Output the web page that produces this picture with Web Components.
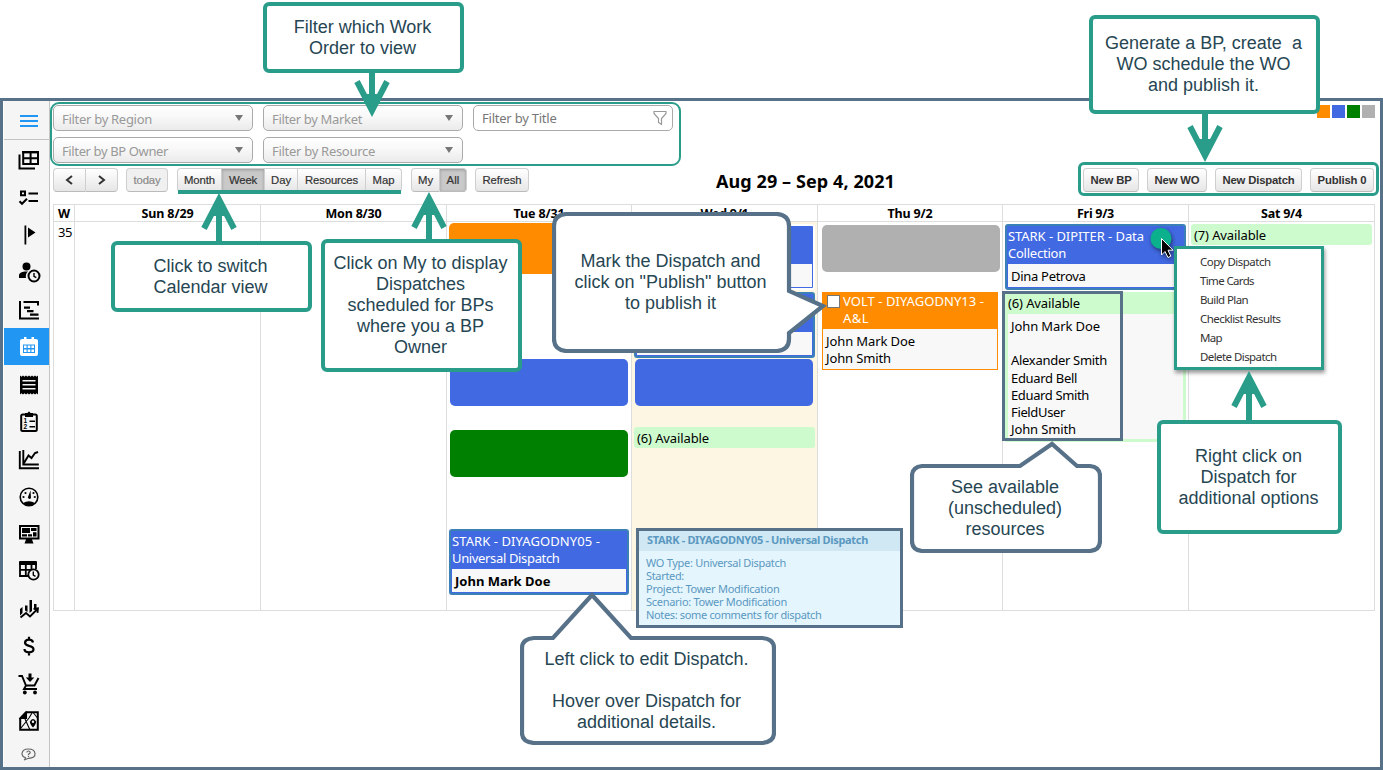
<!DOCTYPE html>
<html lang="en">
<head>
<meta charset="utf-8">
<title>Dispatch Calendar</title>
<style>
  html, body { margin: 0; height: 770px; overflow: hidden; background: #fff; }
  body {
    position: relative;
    width: 1383px;
    box-sizing: border-box;
    padding-top: 98px;
    font-family: "Noto Sans", "Open Sans", sans-serif;
    font-size: 13px;
    color: #000;
    --teal: #2a9d8a;
    --slate: #577189;
    --blue: #4169e1;
    --free: #cefbce;
  }
  .pin { position: absolute; }
</style>
</head>
<body>
<app-frame>
  <side-nav slot="nav"></side-nav>
  <filter-panel></filter-panel>
  <calendar-toolbar></calendar-toolbar>
  <week-calendar></week-calendar>
</app-frame>

<outline-box class="pin" style="left:1002px;top:291px;width:121px;height:150px"></outline-box>
<dispatch-tooltip class="pin" style="left:636px;top:528px"></dispatch-tooltip>
<mouse-pointer class="pin" style="left:1149px;top:226px"></mouse-pointer>
<context-menu class="pin" style="left:1174px;top:246px"></context-menu>

<note-arrow class="pin" dir="down" style="left:352px;top:68px"></note-arrow>
<note-arrow class="pin" dir="up" style="left:199px;top:193px"></note-arrow>
<note-arrow class="pin" dir="up" style="left:409px;top:192px"></note-arrow>
<note-arrow class="pin" dir="down" style="left:1185px;top:113px"></note-arrow>
<note-arrow class="pin" dir="up" style="left:1229px;top:371px"></note-arrow>

<note-box class="pin" style="left:263px;top:2px;width:201px;height:71px">Filter which Work
Order to view</note-box>
<note-box class="pin" style="left:111px;top:241px;width:201px;height:71px">Click to switch
Calendar view</note-box>
<note-box class="pin" style="left:321px;top:239px;width:201px;height:133px">Click on My to display
Dispatches
scheduled for BPs
where you a BP
Owner</note-box>
<note-box class="pin" style="left:1089px;top:15px;width:231px;height:99px">Generate a BP, create  a
WO schedule the WO
and publish it.</note-box>
<note-box class="pin" style="left:1157px;top:420px;width:185px;height:114px">Right click on
Dispatch for
additional options</note-box>

<speech-bubble class="pin" style="left:552px;top:212px;width:275px;height:141px;--pad:0 38px 0 0"
  shape="M14 2H225Q237 3 237 14V79L271 94L237 121V127Q237 138 225 139H14Q2 138 2 127V14Q2 3 14 2Z">Mark the Dispatch and
click on "Publish" button
to publish it</speech-bubble>
<speech-bubble class="pin" style="left:910px;top:439px;width:192px;height:114px;--pad:24px 2px 0 0"
  shape="M12 27H110L142 5L167 27H180Q190 28 190 37V102Q190 111 180 112H12Q2 111 2 102V37Q2 28 12 27Z">See available
(unscheduled)
resources</speech-bubble>
<speech-bubble class="pin" style="left:520px;top:590px;width:256px;height:155px;--pad:46px 3px 0 0"
  shape="M14 48H33L72 5L111 48H242Q254 49 254 58V143Q254 152 242 153H14Q2 152 2 143V58Q2 49 14 48Z">Left click to edit Dispatch.

Hover over Dispatch for
additional details.</speech-bubble>

<script>
const render = (el, html) => {
  el.attachShadow({ mode: "open" }).innerHTML = html;
};

const line = (text, width) => `<fit-line width="${width}">${text}</fit-line>`;

class AppFrame extends HTMLElement {
  constructor() {
    super();
    render(this, `
      <style>
        :host {
          display: flex; box-sizing: border-box; width: 1383px; height: 672px;
          border: 3px solid var(--slate); padding-left: 1px; background: #fff;
        }
        main { flex: 1; padding: 1px 5px 0 0; }
        .swatches { position: absolute; top: 105px; right: 8px; display: flex; gap: 2px; }
        .swatches i { width: 13px; height: 13px; }
      </style>
      <slot name="nav"></slot>
      <main><slot></slot></main>
      <div class="swatches">
        <i style="background:#ff8c00"></i><i style="background:#4169e1"></i>
        <i style="background:#008000"></i><i style="background:#b0b0b0"></i>
      </div>`);
  }
}

const ICONS = [
  ["tables", `<path d="M6.200 4h14.800v12H6.200zM6.200 10.300h15M13.600 4v12" fill="none" stroke="#000" stroke-width="2"/><path d="M5.200 3h16.800v2.400H5.200z"/><path d="M2.500 6.500V20.500h15.500" fill="none" stroke="#000" stroke-width="2"/>`],
  ["checklist", `<path d="M4 5.500h4v3.800H4z" fill="none" stroke="#000" stroke-width="2"/><path d="M11.500 7.500H21M11.500 15H21M2.500 15.300l2.500 2.500 5-5" fill="none" stroke="#000" stroke-width="2"/>`],
  ["flag", `<path d="M7.500 2.500h1.800v19H7.500zM11 4.500l7.500 5-7.500 5z"/>`],
  ["person-clock", `<circle cx="9.500" cy="6.500" r="4"/><path d="M2 18v-2.500C2 12 7 11 11 11.500c-2 1.500-2.500 4-2 6.500z"/><circle cx="17" cy="16" r="5.500" fill="none" stroke="#000" stroke-width="2"/><path d="M17 13v3.300l2.300 1.300" fill="none" stroke="#000" stroke-width="1.400"/>`],
  ["gantt", `<path d="M3 3v17.500h19M6.500 4H21v3.500" fill="none" stroke="#000" stroke-width="2"/><path d="M7 8.500h6v2.200H7zM10 12h6.500v2.200H10zM13 15.500h8.500v2.200H13z"/>`],
  ["calendar", `<path fill="#fff" fill-rule="evenodd" d="M5 4h2V2h2.500v2h5V2H17v2h2q2 0 2 2v13q0 2-2 2H5q-2 0-2-2V6q0-2 2-2zM6 9.500v8.500h12V9.500z"/><path fill="#fff" d="M7 10.500h2.600v2.400H7zM10.700 10.500h2.600v2.400h-2.600zM14.400 10.500H17v2.400h-2.600zM7 14.500h2.600v2.400H7zM10.700 14.500h2.600v2.400h-2.600zM14.400 14.500H17v2.400h-2.600z"/>`],
  ["receipt", `<path fill-rule="evenodd" d="M3 2.500l1.500 1.200L6 2.500l1.500 1.200L9 2.500l1.500 1.200L12 2.500l1.500 1.200L15 2.500l1.500 1.200L18 2.500l1.500 1.200L21 2.500v19l-1.500-1.200L18 21.500l-1.500-1.200L15 21.500l-1.500-1.200L12 21.500l-1.500-1.200L9 21.500l-1.500-1.200L6 21.500l-1.500-1.200L3 21.500zM5.500 7v1.500h13V7zM5.500 11v1.500h13V11zM5.500 15v1.500h13V15z"/>`],
  ["clipboard", `<rect x="4.200" y="4.500" width="15.600" height="16.500" rx="1.500" fill="none" stroke="#000" stroke-width="2"/><path d="M8 3h2.500q1.500-3 3 0H16v4H8zM12.500 10.500H18v1.600h-5.500zM12.500 16H18v1.600h-5.500z"/><text x="6.500" y="13.300" font-family="Liberation Sans" font-weight="bold" font-size="6.500">1</text><text x="6.500" y="19.300" font-family="Liberation Sans" font-weight="bold" font-size="6.500">2</text>`],
  ["line-chart", `<path d="M2.800 4v17.300H22M6.300 3v14.500h15.500M7 16l4.500-7.500 3 2.500 3.500-5 3-1" fill="none" stroke="#000" stroke-width="1.900"/>`],
  ["gauge", `<circle cx="12" cy="12" r="8.800" fill="none" stroke="#000" stroke-width="1.600"/><path d="M6 18q6-3.600 12 0-2.500 3-6 3t-6-3zM10.800 12.500l2.700-7 .5 7.500q-1.800 2-3.200-.5z"/><circle cx="6.500" cy="12" r="1.100"/><circle cx="8.500" cy="8" r="1.100"/><circle cx="16.500" cy="8" r="1.100"/><circle cx="17.800" cy="12" r="1.100"/>`],
  ["monitor", `<path fill-rule="evenodd" d="M2 3h20.500v14.500H15l1.500 4h-9l1.500-4H2zM4 5v10.500h16.500V5z"/><path d="M5 6h8v5H5zM14 6h5.500v3H14zM5 12.200h5v2.300H5zM11 12.200h4v2.300h-4zM16 10.200h3.500v4.300H16z"/>`],
  ["table-clock", `<path d="M3 4v13h8M3 10.800h12M8.800 6v11M14.500 6v5M19 4v6" fill="none" stroke="#000" stroke-width="1.800"/><path d="M2 3q0-1 1-1h16q1 0 1 1v3H2z"/><circle cx="16.500" cy="15.500" r="5.200" fill="#f5f5f5" stroke="#000" stroke-width="1.800"/><path d="M16.300 12.500V16l2.200 1.300" fill="none" stroke="#000" stroke-width="1.400"/>`],
  ["trend", `<path d="M3 12l2.500-2v6L3 18.500zM8 8.500h2.500V15L8 13.500zM12.500 3H15v11l-2.500 2zM17 7h2.500v4L17 13z"/><path d="M3.500 20.500l5.500-4.500 4 3.500 7-7M16.500 11.800l4.500-.5-.5 4.500" fill="none" stroke="#000" stroke-width="1.800"/>`],
  ["dollar", `<path d="M16 8.500Q15.500 5.700 12 5.700T8 8.500q0 2.500 4 3.300 4.500 1 4.500 3.500 0 3-4.500 3T7.500 15M12 2.800v3M12 18v3.500" fill="none" stroke="#000" stroke-width="2.200"/>`],
  ["cart", `<path d="M1.500 4H5l4 9.500h8.500L21.500 6M9 13.500l-2 3.500h13" fill="none" stroke="#000" stroke-width="1.900"/><path d="M11.500 1.500h3v4h2.800L13 10 8.800 5.500h2.700z"/><circle cx="7.800" cy="20.500" r="1.900"/><circle cx="18" cy="20.500" r="1.900"/>`],
  ["map", `<path d="M9 3.200h11.800v17.600H3.200V9.500z" fill="none" stroke="#000" stroke-width="2"/><path d="M3 9.500L9.500 3v6.500zM8 10l5 11M4 19L12 9M12 9l3-5M16.500 4l4 5" stroke="#000" stroke-width="1.100"/><path d="M16 18.500q-3.500-4-3-6 1-2.500 3-2.500t3 2.500q.5 2-3 6z"/><circle cx="16" cy="12.800" r="1.200" fill="#f5f5f5"/>`],
];

class SideNav extends HTMLElement {
  constructor() {
    super();
    render(this, `
      <style>
        :host {
          display: flex; flex-direction: column; box-sizing: border-box; width: 46px;
          height: 666px; background: #f5f5f5; border-right: 1px solid #c4c4c4;
        }
        .burger {
          height: 39px; flex: none; box-sizing: border-box; padding: 14px 0 0 16px;
          border-bottom: 1px solid #c4c4c4; margin-bottom: 1px;
        }
        .burger i { display: block; width: 18px; height: 2px; margin-bottom: 3px; background: #2196f3; }
        .item { height: 37.400px; flex: none; display: flex; align-items: center; padding: 1px 0 0 12.500px; box-sizing: border-box; }
        .item.active { background: #2196f3; }
        svg { width: 24px; height: 24px; display: block; }
        .help { flex: 1; display: flex; align-items: center; padding: 2px 0 0 17px; }
        .help svg { width: 15px; height: 15px; }
      </style>
      <div class="burger"><i></i><i></i><i></i></div>
      ${ICONS.map(([name, art]) => `
        <div class="item ${name === "calendar" ? "active" : ""}"><svg viewBox="0 0 24 24">${art}</svg></div>`).join("")}
      <div class="help"><svg viewBox="0 0 15 15" fill="none" stroke="#666" stroke-width="1.200">
        <path d="M3 13q1.500-.8 1.500-2.200Q1 9.500 1 6.500 1.500 2 7.500 2T14 6.500 7.500 11.300L3 13z"/>
        <path d="M5.800 5.500Q6 4 7.500 4t1.700 1.400Q9.200 6.300 7.500 7.200V8M7.500 8.800v1.200"/></svg></div>`);
  }
}

class FilterField extends HTMLElement {
  constructor() {
    super();
    const isText = this.getAttribute("type") === "text";
    render(this, `
      <style>
        :host {
          display: flex; align-items: center; justify-content: space-between;
          box-sizing: border-box; height: 26px; padding: 2px 9px 0 8px;
          border: 1px solid #aaa; border-radius: 5px; color: #999;
          background: ${isText ? "#fff" : "linear-gradient(#fff, #f8f8f8 45%, #ebebeb)"};
        }
        :host([type=text]) { color: #777; padding: 0 5px 0 8px; }
        .arrow { border: 4px solid transparent; border-top: 6px solid #777; border-bottom: 0; margin-top: -3px; }
        svg { width: 14px; height: 16px; }
      </style>
      ${line(this.getAttribute("label"), this.getAttribute("text-width"))}
      ${isText
        ? `<svg viewBox="0 0 14 16" fill="none" stroke="#999" stroke-width="1.200"><path d="M1 1.500h12v2L8.500 8.500v6l-3-2v-4L1 3.500z"/></svg>`
        : `<span class="arrow"></span>`}`);
  }
}

class FilterPanel extends HTMLElement {
  constructor() {
    super();
    render(this, `
      <style>
        :host {
          display: grid; box-sizing: border-box; width: 631px; height: 64px;
          grid-template-columns: repeat(3, 200px); gap: 6px 10px; align-content: start;
          border: 2px solid var(--teal); border-radius: 9px; padding: 1px;
        }
      </style>
      <filter-field label="Filter by Region" text-width="90"></filter-field>
      <filter-field label="Filter by Market" text-width="90"></filter-field>
      <filter-field label="Filter by Title" text-width="74.500" type="text"></filter-field>
      <filter-field label="Filter by BP Owner" text-width="106"></filter-field>
      <filter-field label="Filter by Resource" text-width="103"></filter-field>`);
  }
}

// Each group is a list of [label, text width, button width, state]
class ButtonGroup extends HTMLElement {
  set buttons(list) {
    if (!this.shadowRoot) this.attachShadow({ mode: "open" });
    this.shadowRoot.innerHTML = `
      <style>
        :host { display: flex; height: 24px; font: 11.300px "Liberation Sans", Arial, sans-serif; color: #333; }
        button {
          all: unset; box-sizing: border-box; display: flex; align-items: center; justify-content: center;
          border: 1px solid #cfcfcf; border-left-width: 0; border-bottom-color: #bbb; padding-bottom: 1px;
          background: linear-gradient(#fff, #e6e6e6); -webkit-text-stroke: .2px;
        }
        button:first-of-type { border-left-width: 1px; border-radius: 4px 0 0 4px; }
        button:last-of-type { border-radius: 0 4px 4px 0; }
        button:only-of-type { border-radius: 4px; }
        .on { background: #c9c9c9; box-shadow: inset 0 1px 3px rgba(0,0,0,.25); }
        .off { color: #8a8a8a; background: #f0f0f0; }
        .bold { font-weight: bold; -webkit-text-stroke: 0; }
        svg { width: 9px; height: 10px; fill: none; stroke: #333; stroke-width: 2; margin-top: 1px; }
      </style>
      ${list.map(([label, textWidth, width, state = ""]) => `
        <button class="${state}" style="width:${width}px">${
          label.startsWith("<svg") ? label : line(label, textWidth)}</button>`).join("")}`;
  }
}

class CalendarToolbar extends HTMLElement {
  constructor() {
    super();
    render(this, `
      <style>
        :host { display: flex; height: 29px; padding: 2px 0 0 3px; position: relative; }
        .views { position: relative; margin: 0 9px 0 9px; }
        .views::after {
          content: ""; position: absolute; left: 1px; right: 1px; top: 22px; height: 4px; background: var(--teal);
        }
        h2 { margin: -1px 0 0; font-size: 18px; line-height: 28px; }
        .actions {
          display: flex; gap: 8px; position: absolute; right: -4px; top: -4px; height: 25px;
          padding: 3px 0 0 2px; width: 293px; border: 3px solid var(--teal); border-radius: 6px;
        }
      </style>
      <button-group id="nav"></button-group>
      <button-group id="today" style="margin-left:8px"></button-group>
      <button-group id="views" class="views"></button-group>
      <button-group id="scope"></button-group>
      <button-group id="refresh" style="margin:0 187px 0 8px"></button-group>
      <h2>${line("Aug 29 – Sep 4, 2021", 179)}</h2>
      <div class="actions">
        <button-group id="bp"></button-group>
        <button-group id="wo"></button-group>
        <button-group id="dispatch"></button-group>
        <button-group id="publish"></button-group>
      </div>`);
  }
  connectedCallback() {
    const group = (id, buttons) => {
      this.shadowRoot.getElementById(id).buttons = buttons;
    };
    group("nav", [
      [`<svg viewBox="0 0 9 10"><path d="M7 1L2 5l5 4"/></svg>`, 0, 33],
      [`<svg viewBox="0 0 9 10"><path d="M2 1l5 4-5 4"/></svg>`, 0, 32],
    ]);
    group("today", [["today", 27, 42, "off"]]);
    group("views", [["Month", 31, 45], ["Week", 28, 43, "on"], ["Day", 20, 33], ["Resources", 53, 68], ["Map", 22, 36]]);
    group("scope", [["My", 15, 29], ["All", 13, 27, "on"]]);
    group("refresh", [["Refresh", 39, 54]]);
    group("bp", [["New BP", 41, 56, "bold"]]);
    group("wo", [["New WO", 45, 60, "bold"]]);
    group("dispatch", [["New Dispatch", 72, 87, "bold"]]);
    group("publish", [["Publish 0", 49, 64, "bold"]]);
  }
}

class EventBlock extends HTMLElement {
  constructor() {
    super();
    render(this, `
      <style>
        :host { display: block; height: 47px; margin: 0 0 0 3px; width: 178px; border-radius: 5px; background: var(--blue); }
      </style>`);
  }
}

class EventCard extends HTMLElement {
  constructor() {
    super();
    render(this, `
      <style>
        :host {
          display: flex; flex-direction: column; box-sizing: border-box; width: 181px; height: 66px;
          margin-left: 2px; border: 2px solid #3c80b8; border-radius: 3px; background: var(--blue);
          line-height: 17px;
        }
        header { height: 38px; box-sizing: border-box; padding: 2px 0 0 1px; color: #fff; }
        .people { flex: 1; margin: 0 1px 1px; padding: 4px 0 0 3px; background: #f8f8f8; }
        :host([plain]) { border-color: #fff; }
        :host([orange]) {
          width: 176px; height: 78px; margin-left: 4px; border: 1px solid #ff8c00; border-radius: 0; background: #ff8c00;
        }
        :host([orange]) header { height: 36px; padding: 0 0 0 20px; position: relative; }
        :host([orange]) .people { margin: 0; }
        .check { display: none; position: absolute; left: 4px; top: 2px; width: 11px; height: 11px; border: 1px solid #767676; background: #fff; }
        :host([orange]) .check { display: block; }
      </style>
      <header><span class="check"></span><slot name="title"></slot></header>
      <div class="people"><slot></slot></div>`);
  }
}

class FreeList extends HTMLElement {
  constructor() {
    super();
    render(this, `
      <style>
        :host { display: block; margin-left: 2px; width: 181px; background: var(--free); border-radius: 3px; }
        header { height: 21px; line-height: 22px; padding-left: 3px; }
        :host([open]) { width: 182px; height: 150px; margin-left: 1px; }
        :host([open]) header { height: 22px; padding-left: 4px; }
        .people { display: none; }
        :host([open]) .people {
          display: block; height: 125px; box-sizing: border-box; margin: 0 3px 0 4px; padding: 4px 0 0 3px;
          background: #f8f8f8; line-height: 17.200px;
        }
      </style>
      <header><slot name="title"></slot></header>
      <div class="people"><slot></slot></div>`);
  }
}

class DayColumn extends HTMLElement {
  constructor() {
    super();
    render(this, `
      <style>
        :host { display: block; border-right: 1px solid #ddd; min-width: 0; }
        h3 {
          margin: 0; height: 16px; line-height: 18px; font-size: 12.500px; text-align: center;
          display: flex; justify-content: center; border-bottom: 1px solid #ddd;
        }
        .body { height: 388px; display: flow-root; }
        :host([today]) .body { background: #fdf6e3; }
      </style>
      <h3>${line(this.getAttribute("day"), this.getAttribute("text-width"))}</h3>
      <div class="body"><slot></slot></div>`);
  }
}

class WeekCalendar extends HTMLElement {
  constructor() {
    super();
    render(this, `
      <style>
        :host {
          display: grid; grid-template-columns: 21px 186px 186px 185px 186px 185px 186px 186px;
          margin: 7px 0 0 3px; width: 1321px; height: 405px; border: 1px solid #ddd; border-right: 0;
        }
        .week { padding: 1px 0 0 4px; }
      </style>
      <day-column day="W" text-width="12"><div class="week">${line("35", 14)}</div></day-column>
      <day-column day="Sun 8/29" text-width="52"></day-column>
      <day-column day="Mon 8/30" text-width="56"></day-column>
      <day-column day="Tue 8/31" text-width="51">
        <event-block style="background:#ff8c00;margin:1px 0 0 2px;height:51px"></event-block>
        <event-block style="margin-top:85px"></event-block>
        <event-block style="margin-top:24px;background:#008000"></event-block>
        <event-card style="margin-top:52px;width:180px">
          <div slot="title">${line("STARK - DIYAGODNY05 -", 148)}${line("Universal Dispatch", 107.5)}</div>
          <b>${line("John Mark Doe", 95.5)}</b>
        </event-card>
      </day-column>
      <day-column day="Wed 9/1" text-width="48" today>
        <event-card plain style="margin-top:2px"></event-card>
        <event-card style="margin-top:2px"></event-card>
        <event-block style="margin-top:1px"></event-block>
        <free-list style="margin-top:21px"><span slot="title">${line("(6) Available", 72)}</span></free-list>
      </day-column>
      <day-column day="Thu 9/2" text-width="45">
        <event-block style="background:#b0b0b0;margin:3px 0 0 4px"></event-block>
        <event-card orange style="margin-top:20px">
          <div slot="title">${line("VOLT - DIYAGODNY13 -", 141)}${line("A&amp;L", 26)}</div>
          ${line("John Mark Doe", 89)}${line("John Smith", 65)}
        </event-card>
      </day-column>
      <day-column day="Fri 9/3" text-width="37">
        <event-card style="margin-top:2px">
          <div slot="title">${line("STARK - DIPITER - Data", 136)}${line("Collection", 58)}</div>
          ${line("Dina Petrova", 74.5)}
        </event-card>
        <free-list open style="margin-top:2px">
          <span slot="title">${line("(6) Available", 72)}</span>
          ${line("John Mark Doe", 89)}<br>
          ${line("Alexander Smith", 96)}${line("Eduard Bell", 66)}${line("Eduard Smith", 78)}
          ${line("FieldUser", 54)}${line("John Smith", 65)}
        </free-list>
      </day-column>
      <day-column day="Sat 9/4" text-width="41">
        <free-list style="margin-top:2px"><span slot="title">${line("(7) Available", 72)}</span></free-list>
      </day-column>`);
  }
}

class OutlineBox extends HTMLElement {
  constructor() {
    super();
    render(this, `<style>:host { display: block; box-sizing: border-box; border: 3px solid var(--slate); }</style>`);
  }
}

class DispatchTooltip extends HTMLElement {
  constructor() {
    super();
    render(this, `
      <style>
        :host {
          display: block; box-sizing: border-box; width: 267px; height: 100px; border: 3px solid var(--slate);
          background: #e4f5fe; color: #5b98c0; font-size: 11px; line-height: 13px;
        }
        header { height: 20px; line-height: 18px; padding-left: 8px; background: #cfe8f4; font-weight: bold; }
        div { padding: 5px 0 0 7px; }
      </style>
      <header>${line("STARK - DIYAGODNY05 - Universal Dispatch", 221)}</header>
      <div>
        ${line("WO Type: Universal Dispatch", 140)}
        ${line("Started:", 38)}
        ${line("Project: Tower Modification", 133.5)}
        ${line("Scenario: Tower Modification", 141)}
        ${line("Notes: some comments for dispatch", 175.5)}
      </div>`);
  }
}

class ContextMenu extends HTMLElement {
  constructor() {
    super();
    render(this, `
      <style>
        :host {
          display: block; box-sizing: border-box; width: 150px; height: 124px; padding: 3px 0 0 23px;
          border: 3px solid var(--teal); background: #fff; color: #333; font-size: 11.500px; line-height: 19px;
          box-shadow: 1px 3px 4px rgba(0,0,0,.4);
        }
      </style>
      ${line("Copy Dispatch", 70.5)}${line("Time Cards", 54)}${line("Build Plan", 48)}
      ${line("Checklist Results", 80.5)}${line("Map", 22)}${line("Delete Dispatch", 76.5)}`);
  }
}

class MousePointer extends HTMLElement {
  constructor() {
    super();
    render(this, `
      <style>
        :host { display: block; width: 28px; height: 36px; }
        svg { display: block; filter: drop-shadow(1px 2px 2px rgba(0,0,0,.5)); }
      </style>
      <svg width="28" height="36">
        <circle cx="12" cy="12.500" r="10.500" fill="#0bb08d"/>
        <path d="M12.500 12.500v16.500l3.500-3.500 3 6 2.800-1.300-2.800-6h5z" fill="#000" stroke="#fff"/>
      </svg>`);
  }
}

class NoteArrow extends HTMLElement {
  constructor() {
    super();
    render(this, `
      <style>
        :host { display: block; width: 40px; height: 49px; }
        :host([dir=down]) { transform: scaleY(-1); }
        svg { display: block; fill: none; stroke: var(--teal); stroke-width: 6; }
      </style>
      <svg width="40" height="49"><path d="M5 35.500L20 6.500l15 29M20 8v41"/><path d="M20 3l-8 20h16z" fill="#2a9d8a" stroke="none"/></svg>`);
  }
}

const NOTE_TEXT = `
  display: flex; align-items: center; justify-content: center; box-sizing: border-box;
  font: 18px/21px "Liberation Sans", Arial, sans-serif; color: #264653;
  text-align: center; white-space: pre;`;

class NoteBox extends HTMLElement {
  constructor() {
    super();
    render(this, `
      <style>:host { ${NOTE_TEXT} padding-right: 2px; background: #fff; border: 4px solid var(--teal); border-radius: 6px; }</style>
      <slot></slot>`);
  }
}

class SpeechBubble extends HTMLElement {
  constructor() {
    super();
    render(this, `
      <style>
        :host { ${NOTE_TEXT} padding: var(--pad); }
        svg { position: absolute; left: 0; top: 0; width: 100%; height: 100%; fill: #fff; stroke: var(--slate); stroke-width: 4.200; }
        span { position: relative; }
      </style>
      <svg><path d="${this.getAttribute("shape")}"/></svg><span><slot></slot></span>`);
  }
}

// One line of text, tracked in or out so that it fills the given width
class FitLine extends HTMLElement {
  constructor() {
    super();
    render(this, `
      <style>
        :host { display: block; white-space: nowrap; }
        span { display: inline-block; }
      </style>
      <span><slot></slot></span>`);
  }
  connectedCallback() {
    const span = this.shadowRoot.querySelector("span");
    const natural = span.getBoundingClientRect().width;
    const gap = (Number(this.getAttribute("width")) - natural) / this.textContent.length;
    span.style.letterSpacing = `${gap.toFixed(3)}px`;
  }
}

customElements.define("app-frame", AppFrame);
customElements.define("side-nav", SideNav);
customElements.define("filter-field", FilterField);
customElements.define("filter-panel", FilterPanel);
customElements.define("button-group", ButtonGroup);
customElements.define("calendar-toolbar", CalendarToolbar);
customElements.define("event-block", EventBlock);
customElements.define("event-card", EventCard);
customElements.define("free-list", FreeList);
customElements.define("day-column", DayColumn);
customElements.define("week-calendar", WeekCalendar);
customElements.define("outline-box", OutlineBox);
customElements.define("dispatch-tooltip", DispatchTooltip);
customElements.define("context-menu", ContextMenu);
customElements.define("mouse-pointer", MousePointer);
customElements.define("note-arrow", NoteArrow);
customElements.define("note-box", NoteBox);
customElements.define("speech-bubble", SpeechBubble);
customElements.define("fit-line", FitLine);
</script>
</body>
</html>
